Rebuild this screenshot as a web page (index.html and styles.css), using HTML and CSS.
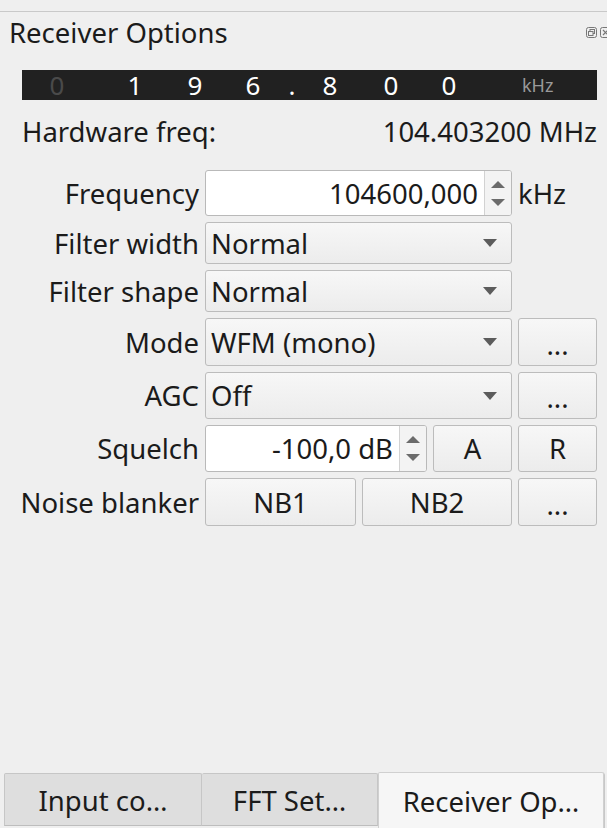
FILE: index.html
```html
<!DOCTYPE html>
<html>
<head>
<meta charset="utf-8">
<link rel="stylesheet" href="styles.css">
</head>
<body>
<div class="dock">
  <div class="topstrip"></div>
  <div class="titlebar">
    <span class="title">Receiver Options</span>
    <span class="tb-icons">
      <svg width="11" height="11" viewBox="0 0 11 11"><rect x="0.5" y="0.5" width="10" height="10" rx="2" fill="none" stroke="#777" stroke-width="1"/><rect x="4" y="2.5" width="4.5" height="4" fill="none" stroke="#777" stroke-width="1"/><rect x="2.5" y="4.5" width="4.5" height="4" fill="#efefef" stroke="#777" stroke-width="1"/></svg>
      <svg width="11" height="11" viewBox="0 0 11 11"><rect x="0.5" y="0.5" width="10" height="10" rx="2" fill="none" stroke="#777" stroke-width="1"/><path d="M3 3 L8 8 M8 3 L3 8" stroke="#777" stroke-width="1.2"/></svg>
    </span>
  </div>

  <div class="panel">
    <div class="freqctrl">
      <span class="pad"></span>
      <span class="dg dim">0</span>
      <span class="gap"></span>
      <span class="dg">1</span>
      <span class="dg">9</span>
      <span class="dg">6</span>
      <span class="dg">.</span>
      <span class="dg">8</span>
      <span class="dg">0</span>
      <span class="dg">0</span>
      <span class="unit">kHz</span>
    </div>

    <div class="hwrow">
      <span>Hardware freq:</span>
      <span>104.403200 MHz</span>
    </div>

    <div class="form">
      <label class="lbl">Frequency</label>
      <div class="ctl">
        <div class="spin w307">
          <span class="spin-val">104600,000</span>
          <span class="spin-btns"><span class="up"></span><span class="down"></span></span>
        </div>
        <span class="suffix">kHz</span>
      </div>

      <label class="lbl">Filter width</label>
      <div class="ctl">
        <div class="combo w307"><span>Normal</span><span class="caret"></span></div>
      </div>

      <label class="lbl">Filter shape</label>
      <div class="ctl">
        <div class="combo w307"><span>Normal</span><span class="caret"></span></div>
      </div>

      <label class="lbl">Mode</label>
      <div class="ctl">
        <div class="combo w307"><span>WFM (mono)</span><span class="caret"></span></div>
        <div class="btn w79 dots">...</div>
      </div>

      <label class="lbl">AGC</label>
      <div class="ctl">
        <div class="combo w307"><span>Off</span><span class="caret"></span></div>
        <div class="btn w79 dots">...</div>
      </div>

      <label class="lbl">Squelch</label>
      <div class="ctl">
        <div class="spin w222">
          <span class="spin-val">-100,0 dB</span>
          <span class="spin-btns"><span class="up"></span><span class="down"></span></span>
        </div>
        <div class="btn w79">A</div>
        <div class="btn w79">R</div>
      </div>

      <label class="lbl">Noise blanker</label>
      <div class="ctl">
        <div class="btn w151">NB1</div>
        <div class="btn w150">NB2</div>
        <div class="btn w79 dots">...</div>
      </div>
    </div>
  </div>

  <div class="tabs">
    <div class="tab t1">Input co…</div>
    <div class="tab t2">FFT Set…</div>
    <div class="tab t3 active">Receiver Op…</div>
  </div>
</div>
</body>
</html>
```

FILE: styles.css
```css
* { box-sizing: border-box; }
html, body {
  margin: 0;
  padding: 0;
  background: #efefef;
}
body {
  font-family: "Noto Sans", "DejaVu Sans", sans-serif;
  font-size: 27.5px;
  color: #1b1b1b;
  width: 607px;
  height: 828px;
  overflow: hidden;
}
.dock {
  display: flex;
  flex-direction: column;
  height: 828px;
}
.topstrip {
  height: 12px;
  border-bottom: 1px solid #c9c9c9;
  flex: none;
}
.titlebar {
  height: 42px;
  display: flex;
  align-items: center;
  justify-content: space-between;
  padding-left: 9px;
  flex: none;
}
.title {
  line-height: 32px;
  position: relative;
  top: 0px;
}
.tb-icons {
  display: flex;
  gap: 3px;
  margin-right: -4px;
  align-self: flex-start;
  margin-top: 15px;
}
.tb-icons svg { display: block; }

.panel {
  padding: 16px 10px 0 22px;
  flex: none;
}
.freqctrl {
  height: 30px;
  background: #212121;
  display: grid;
  grid-template-columns: 6px 58px 20px 58px 62px 54px 24px 52px 70px 46px 1fr;
  align-items: center;
  color: #fff;
  font-size: 26px;
  line-height: 30px;
}
.dg { text-align: center; }
.dg.dim { color: #4a4a4a; }
.unit {
  font-size: 18px;
  color: #9a9a9a;
  padding-left: 50px;
}
.hwrow {
  display: flex;
  justify-content: space-between;
  margin-top: 17px;
  line-height: 30px;
}
.form {
  margin-top: 23px;
  display: grid;
  grid-template-columns: 177px 1fr;
  grid-template-rows: 46px 42px 42px 48px 47px 47px 48px;
  column-gap: 6px;
  row-gap: 6px;
}
.lbl {
  display: flex;
  align-items: center;
  justify-content: flex-end;
  white-space: nowrap;
}
.ctl {
  display: flex;
  gap: 6px;
  align-items: stretch;
}
.w307 { width: 307px; }
.w222 { width: 222px; }
.w79 { width: 79px; }
.w151 { width: 151px; }
.w150 { width: 150px; }

.spin {
  background: #fff;
  border: 1px solid #b9b9b9;
  border-radius: 3px;
  display: flex;
  align-items: stretch;
}
.spin-val {
  flex: 1;
  display: flex;
  align-items: center;
  justify-content: flex-end;
  padding-right: 6px;
  white-space: nowrap;
}
.spin-btns {
  width: 27px;
  border-left: 1px solid #d2d2d2;
  background: #f3f3f3;
  display: flex;
  flex-direction: column;
  align-items: center;
  justify-content: center;
  gap: 11px;
  border-radius: 0 2px 2px 0;
}
.up, .down {
  width: 0;
  height: 0;
  border-left: 7px solid transparent;
  border-right: 7px solid transparent;
}
.up { border-bottom: 7px solid #6b6b6b; }
.down { border-top: 7px solid #6b6b6b; }

.suffix {
  display: flex;
  align-items: center;
  padding-left: 0;
}

.combo, .btn {
  background: linear-gradient(#f7f7f7, #ececec);
  border: 1px solid #bcbcbc;
  border-radius: 3px;
}
.combo {
  display: flex;
  align-items: center;
  justify-content: space-between;
  padding-left: 5px;
  padding-right: 14px;
  white-space: nowrap;
}
.caret {
  width: 0;
  height: 0;
  border-left: 7px solid transparent;
  border-right: 7px solid transparent;
  border-top: 8px solid #5c5c5c;
}
.btn {
  display: flex;
  align-items: center;
  justify-content: center;
}
.btn.dots {
  padding-top: 4px;
  letter-spacing: 0px;
}

.tabs {
  margin-top: auto;
  height: 56px;
  display: flex;
  align-items: stretch;
  padding-left: 4px;
  padding-bottom: 2px;
  flex: none;
}
.tab {
  display: flex;
  align-items: center;
  justify-content: center;
  background: #dedede;
  border: 1px solid #c6c6c6;
  border-bottom-color: #bdbdbd;
  border-radius: 2px 2px 0 0;
  margin-top: 1px;
  padding-top: 2px;
  white-space: nowrap;
}
.t1 { width: 198px; }
.t2 { width: 176px; border-left: none; }
.t3 {
  width: 226px;
  background: #f6f6f6;
  margin-top: 0;
  border-color: #d0d0d0;
  border-bottom: none;
  box-shadow: 1px 1px 0 #c8c8c8;
  margin-bottom: -2px;
}
```
